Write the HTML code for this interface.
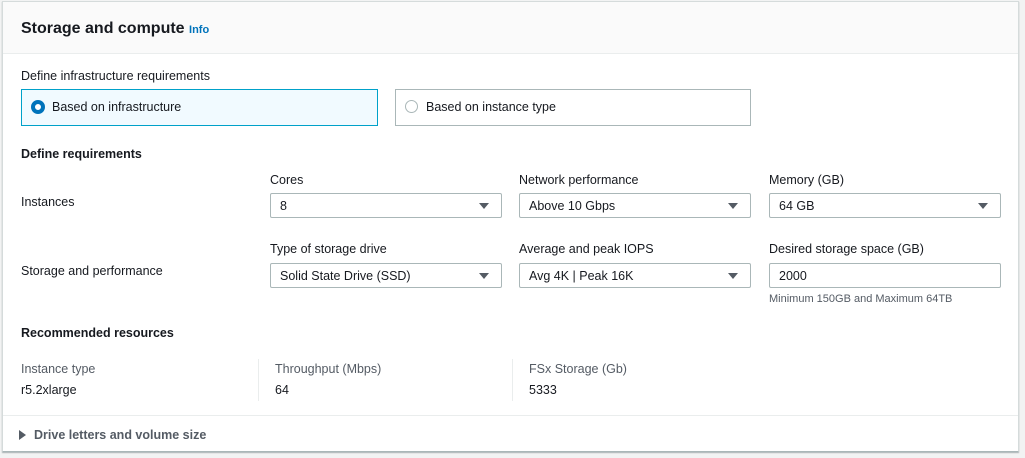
<!DOCTYPE html>
<html><head><style>
*{box-sizing:border-box;margin:0;padding:0}
body{width:1025px;height:458px;background:#f2f3f3;font-family:"Liberation Sans",sans-serif;font-size:12.5px;color:#16191f;position:relative;overflow:hidden}
.panel{position:absolute;left:2px;top:1px;width:1017px;height:451px;background:#fff;border:1px solid #d5dbdb;border-bottom-color:#aab7b8;box-shadow:0 1px 1px rgba(0,28,36,.3)}
.hdr{position:absolute;left:0;top:0;right:0;height:52px;background:#fafafa;border-bottom:1px solid #eaeded}
.a{position:absolute;white-space:nowrap}
.b{font-weight:bold}
.box{position:absolute;border:1px solid #aab7b8;height:37px}
.sel{position:absolute;height:25px;border:1px solid #aab7b8;border-radius:2px;padding:5px 0 0 9px}
.sel .tri{position:absolute;right:12px;top:9px;width:0;height:0;border-left:5px solid transparent;border-right:5px solid transparent;border-top:6px solid #545b64}
.g{color:#545b64}
.vl{position:absolute;width:1px;background:#eaeded;top:357px;height:42px}
</style></head><body>
<div class="panel">
<div class="hdr"></div>
<div class="a b" style="left:18px;top:18px;font-size:16px">Storage and compute <span style="color:#0073bb;font-size:11px">Info</span></div>
<div class="a" style="left:18px;top:67px">Define infrastructure requirements</div>
<div class="box" style="left:18px;top:87px;width:357px;background:#f1faff;border-color:#00a1c9"></div>
<div class="a" style="left:28px;top:98px;width:14px;height:14px;border-radius:50%;border:4px solid #0073bb;background:#fff"></div>
<div class="a" style="left:49px;top:98px">Based on infrastructure</div>
<div class="box" style="left:392px;top:87px;width:356px"></div>
<div class="a" style="left:402px;top:98px;width:13px;height:13px;border-radius:50%;border:1px solid #aab7b8"></div>
<div class="a" style="left:423px;top:98px">Based on instance type</div>
<div class="a b" style="left:18px;top:145px">Define requirements</div>
<div class="a" style="left:18px;top:193px">Instances</div>
<div class="a" style="left:267px;top:171px">Cores</div>
<div class="a" style="left:516px;top:171px">Network performance</div>
<div class="a" style="left:766px;top:171px">Memory (GB)</div>
<div class="sel" style="left:267px;top:191px;width:232px">8<span class="tri"></span></div>
<div class="sel" style="left:516px;top:191px;width:232px">Above 10 Gbps<span class="tri"></span></div>
<div class="sel" style="left:766px;top:191px;width:232px">64 GB<span class="tri"></span></div>
<div class="a" style="left:18px;top:262px">Storage and performance</div>
<div class="a" style="left:267px;top:240px">Type of storage drive</div>
<div class="a" style="left:516px;top:240px">Average and peak IOPS</div>
<div class="a" style="left:766px;top:240px">Desired storage space (GB)</div>
<div class="sel" style="left:267px;top:261px;width:232px">Solid State Drive (SSD)<span class="tri"></span></div>
<div class="sel" style="left:516px;top:261px;width:232px">Avg 4K | Peak 16K<span class="tri"></span></div>
<div class="sel" style="left:766px;top:261px;width:232px">2000</div>
<div class="a g" style="left:766px;top:291px;font-size:11px">Minimum 150GB and Maximum 64TB</div>
<div class="a b" style="left:18px;top:324px">Recommended resources</div>
<div class="a g" style="left:18px;top:360px">Instance type</div>
<div class="a" style="left:18px;top:381px">r5.2xlarge</div>
<div class="vl" style="left:255px"></div>
<div class="a g" style="left:272px;top:360px">Throughput (Mbps)</div>
<div class="a" style="left:272px;top:381px">64</div>
<div class="vl" style="left:509px"></div>
<div class="a g" style="left:526px;top:360px">FSx Storage (Gb)</div>
<div class="a" style="left:526px;top:381px">5333</div>
<div class="a" style="left:0;right:0;top:413px;height:1px;background:#eaeded"></div>
<div class="a" style="left:16px;top:428px;width:0;height:0;border-top:5px solid transparent;border-bottom:5px solid transparent;border-left:7px solid #545b64"></div>
<div class="a b" style="left:31px;top:426px;color:#545b64">Drive letters and volume size</div>
</div>
</body></html>
